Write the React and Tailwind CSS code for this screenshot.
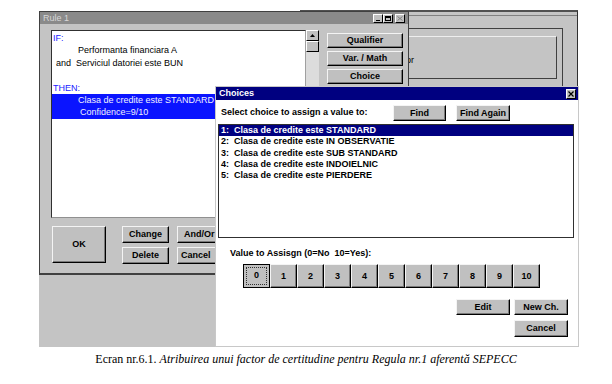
import React from "react";

const Btn = ({ className = "", children }) => (
  <div
    className={
      "flex items-center justify-center bg-[#c0c0c0] border border-t-[#f4f4f4] border-l-[#f4f4f4] border-r-black border-b-black shadow-[inset_-1px_-1px_0_#7a7a7a] font-bold text-[9px] leading-none text-black whitespace-nowrap overflow-hidden " +
      className
    }
  >
    {children}
  </div>
);

const TitleBtn = ({ children }) => (
  <div className="w-[10px] h-[9px] bg-[#c0c0c0] border border-t-white border-l-white border-r-black border-b-black flex items-center justify-center">
    {children}
  </div>
);

export default function App() {
  const values = ["0", "1", "2", "3", "4", "5", "6", "7", "8", "9", "10"];
  const choices = [
    "1:  Clasa de credite este STANDARD",
    "2:  Clasa de credite este IN OBSERVATIE",
    "3:  Clasa de credite este SUB STANDARD",
    "4:  Clasa de credite este INDOIELNIC",
    "5:  Clasa de credite este PIERDERE",
  ];
  return (
    <div
      className="w-[612px] h-[384px] bg-white flex flex-col overflow-hidden"
      style={{ fontFamily: '"Liberation Sans", Arial, sans-serif' }}
    >
      {/* desktop */}
      <div className="relative w-full h-[347px] shrink-0">
        <div className="absolute left-[39px] top-[11px] w-[539px] h-[336px] bg-[#c4c4c4]" />

        {/* background window */}
        <div className="absolute left-[300px] top-[10px] w-[278px] h-[90px] bg-[#c4c4c4] border-t-2 border-t-[#505050] border-r border-r-[#303030]">
          <div className="h-[4px] border-b border-b-[#808080]" />
          <div className="ml-[20px] mt-[12px] w-[243px] h-[60px] border-t border-l border-r border-[#404040] pt-[7px]">
            <div className="w-[236px] h-[43px] bg-[#c4c4c4] border border-t-[#eeeeee] border-l-[#eeeeee] border-r-[#404040] border-b-[#404040] flex items-center pt-[6px]">
              <span className="w-[92px] text-right text-[9px] text-black">Editor</span>
            </div>
          </div>
        </div>

        {/* Rule 1 window */}
        <div className="absolute left-[39px] top-[11px] w-[370px] h-[264px] bg-[#c4c4c4] border border-[#404040] border-b-2 flex flex-col">
          <div className="h-[12px] bg-[#8a8a8a] flex items-center justify-between">
            <span className="pl-[3px] text-[9px] leading-none text-[#d6d6d6]">Rule 1</span>
            <div className="flex items-center mr-[3px]">
              <TitleBtn>
                <div className="w-[4px] h-[1px] bg-black mt-[4px]" />
              </TitleBtn>
              <TitleBtn>
                <div className="w-[6px] h-[5px] border border-black border-t-2" />
              </TitleBtn>
              <div className="w-[2px]" />
              <TitleBtn>
                <svg width="6" height="5" viewBox="0 0 6 5">
                  <path d="M0.5 0.5 L5.5 4.5 M5.5 0.5 L0.5 4.5" stroke="#808080" strokeWidth="1" />
                </svg>
              </TitleBtn>
            </div>
          </div>
          <div className="flex pl-[11px] mt-[6px]">
            <div className="w-[255px] h-[188px] bg-white border border-t-[#303030] border-l-[#303030] border-r-[#a0a0a0] border-b-[#909090] text-[9px] leading-[12.4px] text-black pt-[1px]">
              <div className="pl-[1px] text-[#1a1aff]">IF:</div>
              <div className="pl-[26px]">Performanta financiara A</div>
              <div className="pl-[4px]">and&nbsp;&nbsp;Serviciul datoriei este BUN</div>
              <div>&nbsp;</div>
              <div className="pl-[1px] text-[#1a1aff]">THEN:</div>
              <div className="bg-[#0a14ff] text-[#f0f0ff] whitespace-nowrap">
                <div className="pl-[26px]">Clasa de credite este STANDARD</div>
                <div className="pl-[28px]">Confidence=9/10</div>
              </div>
            </div>
            <div className="w-[13px] h-[188px] bg-[#dcdcdc] flex flex-col">
              <div className="h-[11px] bg-[#c0c0c0] border border-t-white border-l-white border-r-black border-b-black flex items-center justify-center">
                <svg width="5" height="3" viewBox="0 0 5 3">
                  <path d="M2.5 0 L5 3 L0 3 Z" fill="black" />
                </svg>
              </div>
              <div className="h-[11px] bg-[#c0c0c0] border border-t-white border-l-white border-r-black border-b-black" />
            </div>
            <div className="ml-[8px] mt-[3px] w-[76px] flex flex-col gap-[3px]">
              <Btn className="h-[15px]">Qualifier</Btn>
              <Btn className="h-[15px]">Var. / Math</Btn>
              <Btn className="h-[15px]">Choice</Btn>
            </div>
          </div>
          <div className="flex pl-[12px] mt-[8px] items-start">
            <Btn className="w-[54px] h-[37px]">OK</Btn>
            <div className="ml-[16px] flex flex-col gap-[4px]">
              <Btn className="w-[47px] h-[17px]">Change</Btn>
              <Btn className="w-[47px] h-[17px]">Delete</Btn>
            </div>
            <div className="ml-[8px] flex flex-col gap-[4px]">
              <Btn className="w-[50px] h-[17px] justify-start pl-[6px]">And/Or</Btn>
              <Btn className="w-[50px] h-[17px] justify-start pl-[3px]">Cancel</Btn>
            </div>
          </div>
        </div>

        {/* Choices dialog */}
        <div className="absolute left-[215px] top-[86px] w-[364px] h-[261px] bg-white border border-[#c8c8c8] flex flex-col">
          <div className="h-[13px] bg-[#000080] flex items-center justify-between">
            <span className="pl-[3px] text-[9px] font-bold leading-none text-white">Choices</span>
            <div className="mr-[2px] w-[10px] h-[10px] bg-[#c0c0c0] border border-t-white border-l-white border-r-black border-b-black flex items-center justify-center">
              <svg width="6" height="6" viewBox="0 0 6 6">
                <path d="M0.5 0.5 L5.5 5.5 M5.5 0.5 L0.5 5.5" stroke="black" strokeWidth="1.2" />
              </svg>
            </div>
          </div>
          <div className="flex items-center mt-[5px] pl-[5px]">
            <span className="w-[172px] text-[9px] font-bold text-black whitespace-nowrap">
              Select choice to assign a value to:
            </span>
            <Btn className="w-[53px] h-[16px]">Find</Btn>
            <Btn className="ml-[10px] w-[54px] h-[16px]">Find Again</Btn>
          </div>
          <div className="mt-[3px] ml-[2px] w-[356px] h-[114px] border border-[#303030] bg-white">
            {choices.map((c, i) => (
              <div
                key={c}
                className={
                  "h-[11.3px] flex items-center pl-[2px] text-[9px] font-bold whitespace-pre " +
                  (i === 0 ? "bg-[#000080] text-white" : "text-black")
                }
              >
                {c}
              </div>
            ))}
          </div>
          <div className="mt-[9px] pl-[14px] text-[9px] font-bold text-black leading-[12px] whitespace-pre">
            {"Value to Assisgn (0=No  10=Yes):"}
          </div>
          <div className="mt-[5px] pl-[27px] flex">
            {values.map((v, i) =>
              i === 0 ? (
                <div key={v} className="w-[27px] h-[24px] bg-[#c0c0c0] border border-black p-[2px]">
                  <div className="w-full h-full border border-dotted border-[#303030] flex items-center justify-center font-bold text-[9px] text-black">
                    {v}
                  </div>
                </div>
              ) : (
                <Btn key={v} className="w-[27px] h-[24px]">
                  {v}
                </Btn>
              )
            )}
          </div>
          <div className="mt-[11px] flex justify-end pr-[10px] gap-[4px]">
            <Btn className="w-[54px] h-[16px]">Edit</Btn>
            <Btn className="w-[54px] h-[16px]">New Ch.</Btn>
          </div>
          <div className="mt-[5px] flex justify-end pr-[10px]">
            <Btn className="w-[54px] h-[17px]">Cancel</Btn>
          </div>
        </div>
      </div>

      <div
        className="mt-[5px] text-center text-[12px] leading-[14px] text-black"
        style={{ fontFamily: '"Liberation Serif", "Times New Roman", serif' }}
      >
        Ecran nr.6.1. <i>Atribuirea unui factor de certitudine pentru Regula nr.1 aferentă SEPECC</i>
      </div>
    </div>
  );
}
